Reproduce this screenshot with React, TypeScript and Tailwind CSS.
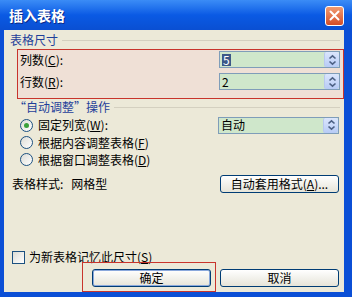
import React from "react";

const font = { fontFamily: '"Noto Sans CJK SC", "Noto Sans", sans-serif' };

function Arrows() {
  return (
    <div className="w-[15px] h-full flex items-center justify-center bg-gradient-to-b from-[#dbe6fd] to-[#b7cbf5] border-l border-[#b8c8ef] rounded-[2px]">
      <svg width="9" height="12" viewBox="0 0 9 12">
        <path d="M1.5 4.5 L4.5 1.8 L7.5 4.5" fill="none" stroke="#4d6185" strokeWidth="1.6" />
        <path d="M1.5 7.5 L4.5 10.2 L7.5 7.5" fill="none" stroke="#4d6185" strokeWidth="1.6" />
      </svg>
    </div>
  );
}

function Field({ children }: { children: React.ReactNode }) {
  return (
    <div className="w-[121px] h-[17px] box-border border border-[#7f9db9] bg-[#cfe7cb] flex items-stretch">
      <div className="flex-1 flex items-center pl-[2px] text-[12px] leading-none text-black">{children}</div>
      <Arrows />
    </div>
  );
}

function Radio({ checked }: { checked?: boolean }) {
  return (
    <div className="w-[13px] h-[13px] rounded-full border border-[#1c5180] bg-gradient-to-br from-[#dcdcd5] to-white flex items-center justify-center">
      {checked && <div className="w-[5px] h-[5px] rounded-full bg-[#3aa13a]" />}
    </div>
  );
}

function XPButton({ children, isDefault }: { children: React.ReactNode; isDefault?: boolean }) {
  return (
    <div
      className={
        "w-[119px] h-[18px] box-border rounded-[3px] border border-[#003c74] bg-gradient-to-b from-white to-[#e6e4d8] flex items-center justify-center text-[12px] leading-none text-black " +
        (isDefault ? "shadow-[inset_0_0_0_1px_#8aa8dc]" : "")
      }
    >
      {children}
    </div>
  );
}

function GroupHeader({ children, pl }: { children: React.ReactNode; pl: string }) {
  return (
    <div className={"h-[16px] flex items-center gap-[4px] pr-[4px] " + pl}>
      <span className="text-[12px] leading-none text-[#1f3f9a] whitespace-nowrap">{children}</span>
      <div className="flex-1 h-px bg-[#d4d0c0]" />
    </div>
  );
}

export default function App() {
  return (
    <div className="w-[352px] h-[297px] overflow-hidden bg-[#0b4fd6] flex flex-col" style={font}>
      {/* Title bar */}
      <div className="h-[30px] flex items-center justify-between pl-[9px] pr-[8px] bg-gradient-to-b from-[#3b8cf6] via-[#0a5ae4] to-[#0a4fd2]">
        <span className="text-white font-bold text-[14px] leading-none [text-shadow:1px_1px_0_#0a2a8a]">插入表格</span>
        <div className="w-[19px] h-[20px] mt-[1px] rounded-[3px] border border-white bg-gradient-to-b from-[#f09a70] to-[#d44c26] flex items-center justify-center">
          <svg width="11" height="11" viewBox="0 0 11 11">
            <path d="M1.5 1.5 L9.5 9.5 M9.5 1.5 L1.5 9.5" stroke="white" strokeWidth="2" strokeLinecap="round" />
          </svg>
        </div>
      </div>

      {/* Body */}
      <div className="flex-1 flex pl-[4px] pr-[8px] pb-[5px] bg-[#0b4fd6]">
        <div className="flex-1 bg-[#ece9d8] flex flex-col relative text-black">
          <div className="mt-[2px]">
            <GroupHeader pl="pl-[6px]">表格尺寸</GroupHeader>
          </div>

          {/* Annotated size box */}
          <div className="mt-[1px] ml-[13px] h-[50px] box-border border border-[#c8342c] bg-[#efe0d6] pt-[1px] pr-[3px] pl-[2px] flex flex-col gap-[5px]">
            <div className="h-[17px] flex items-center justify-between">
              <span className="text-[12px] leading-none">列数(<span className="underline">C</span>):</span>
              <Field>
                <span className="bg-[#3c5887] text-white px-[1px]">5</span>
              </Field>
            </div>
            <div className="h-[17px] flex items-center justify-between">
              <span className="text-[12px] leading-none">行数(<span className="underline">R</span>):</span>
              <Field>2</Field>
            </div>
          </div>

          <GroupHeader pl="pl-[10px]">“自动调整”操作</GroupHeader>

          <div className="mt-[1px] h-[18px] flex items-center justify-between pl-[16px] pr-[5px]">
            <div className="flex items-center gap-[5px]">
              <Radio checked />
              <span className="text-[12px] leading-none">固定列宽(<span className="underline">W</span>):</span>
            </div>
            <Field>自动</Field>
          </div>
          <div className="h-[17px] flex items-center gap-[5px] pl-[16px]">
            <Radio />
            <span className="text-[12px] leading-none">根据内容调整表格(<span className="underline">F</span>)</span>
          </div>
          <div className="h-[17px] flex items-center gap-[5px] pl-[16px]">
            <Radio />
            <span className="text-[12px] leading-none">根据窗口调整表格(<span className="underline">D</span>)</span>
          </div>

          <div className="mt-[7px] h-[18px] flex items-center justify-between pl-[8px] pr-[5px]">
            <div className="flex items-center gap-[8px] text-[12px] leading-none">
              <span>表格样式:</span>
              <span>网格型</span>
            </div>
            <XPButton>自动套用格式(<span className="underline">A</span>)...</XPButton>
          </div>

          <div className="flex-1" />

          <div className="h-[14px] flex items-center gap-[4px] pl-[8px]">
            <div className="w-[13px] h-[13px] border border-[#1c5180] bg-gradient-to-br from-[#dcdcd5] to-white" />
            <span className="text-[12px] leading-none">为新表格记忆此尺寸(<span className="underline">S</span>)</span>
          </div>

          <div className="mt-[5px] mb-[5px] flex justify-end gap-[9px] pr-[5px]">
            <XPButton isDefault>确定</XPButton>
            <XPButton>取消</XPButton>
          </div>

          {/* annotation around OK button */}
          <div className="absolute left-[78px] top-[232px] w-[134px] h-[30px] border border-[#c8342c] pointer-events-none" />
        </div>
      </div>
    </div>
  );
}
